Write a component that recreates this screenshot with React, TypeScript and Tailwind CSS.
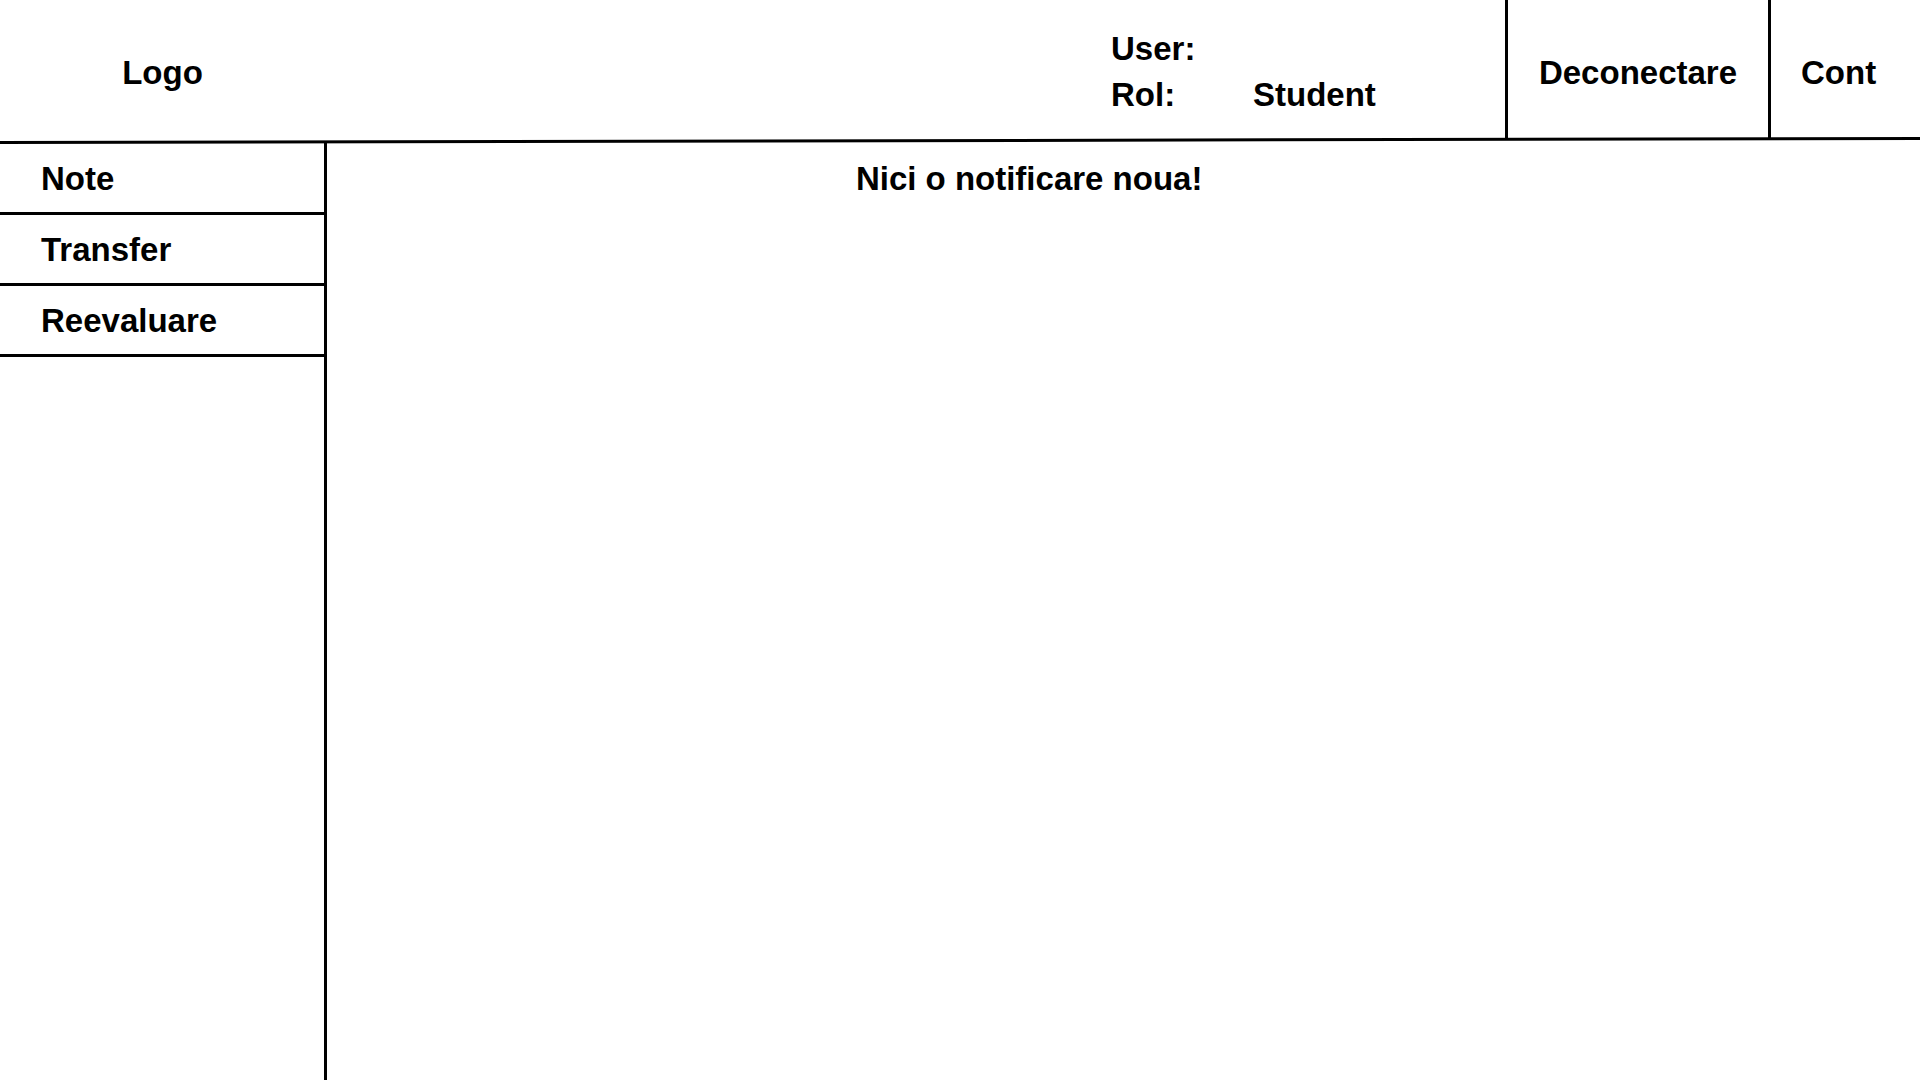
import React from "react";

const menu = ["Note", "Transfer", "Reevaluare"];

function Header() {
  return (
    <header>
      <div className="flex h-[139px] items-stretch">
        <a href="#logo" className="flex w-[325px] items-center justify-center pt-1.5">
          Logo
        </a>
        <dl className="ml-auto grid w-[394px] grid-cols-[142px_1fr] content-center pt-1 leading-[46px]">
          <dt>User:</dt>
          <dd></dd>
          <dt>Rol:</dt>
          <dd>Student</dd>
        </dl>
        <button type="button" className="w-[263px] cursor-pointer border-l-[3px] border-black pt-1.5">
          Deconectare
        </button>
        <a href="#cont" className="flex w-[152px] items-center border-l-[3px] border-black pt-1.5 pl-[30px]">
          Cont
        </a>
      </div>
      {/* slightly slanted rule under the header */}
      <div aria-hidden="true" className="h-[3px] -skew-y-[0.12deg] bg-black" />
    </header>
  );
}

function Sidebar() {
  return (
    <nav className="w-[327px] shrink-0 border-r-[3px] border-black pt-[2px]">
      <ul>
        {menu.map((item) => (
          <li key={item}>
            <a
              href={`#${item.toLowerCase()}`}
              className="flex h-[71px] items-center border-b-[3px] border-black pt-[2px] pl-[41px]"
            >
              {item}
            </a>
          </li>
        ))}
      </ul>
    </nav>
  );
}

export default function App() {
  return (
    <div className="flex min-h-screen flex-col overflow-hidden bg-white font-['Liberation_Sans',Arial,sans-serif] text-[33px] font-bold text-black">
      <Header />
      <div className="flex flex-1">
        <Sidebar />
        <main className="flex-1">
          <p className="pl-[33.2%] leading-[74px]">Nici o notificare noua!</p>
        </main>
      </div>
    </div>
  );
}
